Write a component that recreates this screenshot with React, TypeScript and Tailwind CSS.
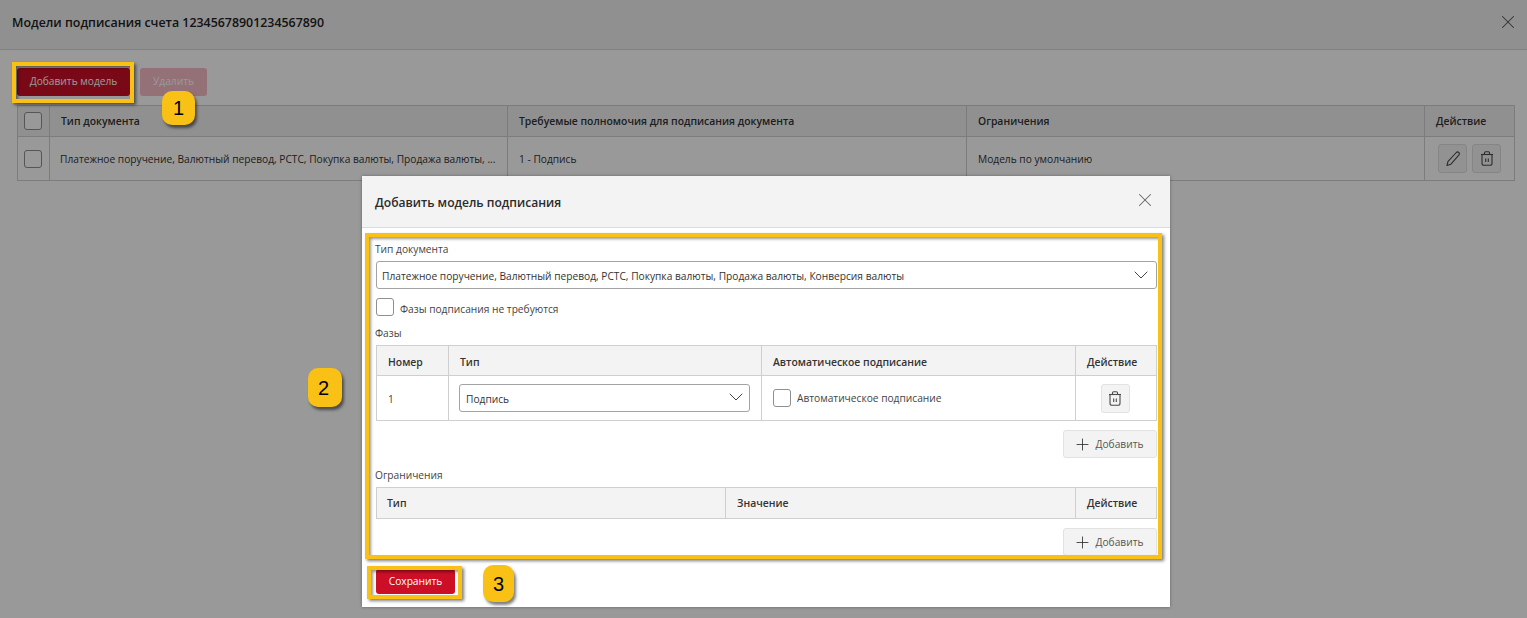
import { Plus, X, ChevronDown } from "lucide-react"

const font = { fontFamily: '"Open Sans", "Noto Sans", sans-serif' }

function TrashIcon() {
  return (
    <svg width="16" height="17" viewBox="0 0 16 17" fill="none" stroke="#4a4a4a" strokeWidth="1.1">
      <path d="M2 4.5h12" />
      <path d="M5.5 4.5V2.8c0-.7.4-1.1 1.1-1.1h2.8c.7 0 1.1.4 1.1 1.1v1.7" />
      <path d="M3 4.5v8.7c0 1.3.8 2.1 2.1 2.1h5.8c1.3 0 2.1-.8 2.1-2.1V4.5" />
      <path d="M6.7 8.5v3.5M9.3 8.5v3.5" />
    </svg>
  )
}

function PencilIcon() {
  return (
    <svg width="16" height="16" viewBox="0 0 16 16" fill="none" stroke="#4a4a4a" strokeWidth="1.1" strokeLinejoin="round">
      <path d="M11.3 1.5c.8-.7 1.9-.6 2.6.1.7.8.6 1.8-.1 2.5L5.7 13.3 2 14.5l.9-3.8z" />
    </svg>
  )
}

function Checkbox() {
  return <span className="block w-[18px] h-[18px] shrink-0 bg-white border border-[#8f8f8f] rounded-[3px]" />
}

function Badge({ n, className }: { n: string; className: string }) {
  return (
    <div
      className={`absolute flex items-center justify-center bg-[#f9c116] rounded-[10px] text-[20px] text-black shadow-[2px_3px_3px_rgba(0,0,0,0.5)] ${className}`}
      style={{ fontFamily: '"Liberation Sans", sans-serif' }}
    >
      {n}
    </div>
  )
}

function Frame({ className }: { className: string }) {
  return (
    <div className={`absolute border-[4px] border-[#f9c116] shadow-[2px_2px_3px_rgba(0,0,0,0.5),inset_2px_2px_3px_rgba(0,0,0,0.4)] ${className}`} />
  )
}

function AddButton() {
  return (
    <div className="flex justify-end">
      <button className="flex items-center justify-center gap-[4px] w-[94px] h-[28px] pr-[4px] bg-[#f3f3f3] border border-[#e2e2e2] rounded-[3px] text-[10.2px] text-[#555]">
        <Plus size={19} strokeWidth={1} color="#222" />
        <span className="pt-[2px]">Добавить</span>
      </button>
    </div>
  )
}

function Select({ value, className, chevron }: { value: string; className: string; chevron: string }) {
  return (
    <div className={`flex items-center justify-between bg-white border border-[#a3a3a3] rounded-[3px] text-[10.2px] text-[#333] ${className}`}>
      <span className="pt-[3px]">{value}</span>
      <ChevronDown size={24} strokeWidth={1} color="#444" className={chevron} />
    </div>
  )
}

export default function App() {
  return (
    <div className="relative w-[1527px] h-[618px] overflow-hidden bg-white" style={font}>
      {/* Page behind the dialog */}
      <div className="flex items-center justify-between h-[50px] pl-[12px] pr-[8px] bg-[#f1f1f1] border-b border-[#d8d8d8]">
        <h1 className="text-[12.4px] font-semibold text-[#222] pb-[2px]">Модели подписания счета 12345678901234567890</h1>
        <X size={22} strokeWidth={1.1} color="#555" className="mb-[5px]" />
      </div>

      <div className="pl-[17px] pr-[12px] pt-[18px]">
        <div className="flex gap-[10px] h-[37px]">
          <button className="w-[113px] h-[28px] bg-[#cc0f27] rounded-[3px] text-[10.2px] text-white">Добавить модель</button>
          <button className="w-[67px] h-[28px] bg-[#f6bcc6] rounded-[3px] text-[10.2px] text-white">Удалить</button>
        </div>

        <div className="w-[1498px] border border-[#cfcfcf] text-[10.2px] text-[#333]">
          <div className="grid grid-cols-[32px_458px_459px_458px_1fr] h-[31px] bg-[#f1f1f1] border-b border-[#cfcfcf] font-semibold text-[10.4px]">
            <div className="flex items-center pl-[6px] border-r border-[#cfcfcf]"><Checkbox /></div>
            <div className="flex items-center pl-[11px] pt-[2px] border-r border-[#cfcfcf]">Тип документа</div>
            <div className="flex items-center pl-[11px] pt-[2px] border-r border-[#cfcfcf]">Требуемые полномочия для подписания документа</div>
            <div className="flex items-center pl-[11px] pt-[2px] border-r border-[#cfcfcf]">Ограничения</div>
            <div className="flex items-center pl-[11px] pt-[2px]">Действие</div>
          </div>
          <div className="grid grid-cols-[32px_458px_459px_458px_1fr] h-[43px]">
            <div className="flex items-center pl-[6px] border-r border-[#cfcfcf]"><Checkbox /></div>
            <div className="flex items-center pl-[10px] pt-[3px] border-r border-[#cfcfcf] whitespace-nowrap">Платежное поручение, Валютный перевод, РСТС, Покупка валюты, Продажа валюты, ...</div>
            <div className="flex items-center pl-[11px] pt-[3px] border-r border-[#cfcfcf]">1 - Подпись</div>
            <div className="flex items-center pl-[11px] pt-[3px] border-r border-[#cfcfcf]">Модель по умолчанию</div>
            <div className="flex items-center gap-[5px] pl-[13px]">
              <button className="flex items-center justify-center w-[29px] h-[29px] bg-[#f3f3f3] border border-[#dedede] rounded-[3px]"><PencilIcon /></button>
              <button className="flex items-center justify-center w-[29px] h-[29px] bg-[#f3f3f3] border border-[#dedede] rounded-[3px]"><TrashIcon /></button>
            </div>
          </div>
        </div>
      </div>

      {/* Overlay */}
      <div className="absolute inset-0 bg-black/40" />

      {/* Dialog */}
      <div className="absolute left-[362px] top-[176px] w-[808px] h-[431px] bg-white shadow-[0_0_3px_rgba(0,0,0,0.35)]">
        <div className="flex items-center justify-between h-[52px] pl-[13px] pr-[14px] bg-[#f3f3f3] border-b border-[#dcdcdc]">
          <h2 className="text-[12.1px] font-semibold text-[#2b2b2b] pt-[4px]">Добавить модель подписания</h2>
          <X size={22} strokeWidth={1.1} color="#666" className="mb-[4px]" />
        </div>

        <div className="pl-[14px] pr-[13px] text-[10.2px] text-[#444]">
          <label className="block pt-[14px] leading-[14px] -ml-[1px]">Тип документа</label>
          <Select
            value="Платежное поручение, Валютный перевод, РСТС, Покупка валюты, Продажа валюты, Конверсия валюты"
            className="mt-[5px] h-[28px] pl-[5px] pr-[3px]"
            chevron=""
          />
          <div className="flex items-center gap-[6px] mt-[9px] h-[18px]">
            <Checkbox />
            <span className="pt-[6px]">Фазы подписания не требуются</span>
          </div>
          <label className="block mt-[10px] leading-[14px] -ml-[1px]">Фазы</label>

          <div className="mt-[5px] border border-[#cfcfcf]">
            <div className="grid grid-cols-[72px_313px_314px_1fr] h-[30px] bg-[#f3f3f3] border-b border-[#cfcfcf] font-semibold text-[#333] text-[10.4px]">
              <div className="flex items-center pl-[11px] pt-[4px] border-r border-[#cfcfcf]">Номер</div>
              <div className="flex items-center pl-[11px] pt-[4px] border-r border-[#cfcfcf]">Тип</div>
              <div className="flex items-center pl-[11px] pt-[4px] border-r border-[#cfcfcf]">Автоматическое подписание</div>
              <div className="flex items-center pl-[11px] pt-[4px]">Действие</div>
            </div>
            <div className="grid grid-cols-[72px_313px_314px_1fr] h-[44px]">
              <div className="flex items-center pl-[11px] pt-[4px] border-r border-[#cfcfcf]">1</div>
              <div className="flex items-center pl-[10px] pr-[11px] border-r border-[#cfcfcf]">
                <Select value="Подпись" className="w-full h-[28px] pl-[6px] pr-[1px]" chevron="-mt-[2px]" />
              </div>
              <div className="flex items-center gap-[6px] pl-[11px] border-r border-[#cfcfcf]">
                <Checkbox />
                <span className="pt-[2px]">Автоматическое подписание</span>
              </div>
              <div className="flex items-center justify-center pr-[2px]">
                <button className="flex items-center justify-center w-[29px] h-[29px] bg-[#f3f3f3] border border-[#e2e2e2] rounded-[3px]"><TrashIcon /></button>
              </div>
            </div>
          </div>

          <div className="mt-[9px]"><AddButton /></div>
          <label className="block mt-[10px] leading-[14px] -ml-[1px]">Ограничения</label>

          <div className="mt-[5px] border border-[#cfcfcf]">
            <div className="grid grid-cols-[349px_350px_1fr] h-[30px] bg-[#f3f3f3] font-semibold text-[#333] text-[10.4px]">
              <div className="flex items-center pl-[10px] pt-[2px] border-r border-[#cfcfcf]">Тип</div>
              <div className="flex items-center pl-[11px] pt-[2px] border-r border-[#cfcfcf]">Значение</div>
              <div className="flex items-center pl-[11px] pt-[2px]">Действие</div>
            </div>
          </div>

          <div className="mt-[9px]"><AddButton /></div>

          <button className="block mt-[13px] w-[79px] h-[25px] bg-[#cc0f27] rounded-[3px] text-[10.2px] text-white">Сохранить</button>
        </div>
      </div>

      {/* Annotations */}
      <Frame className="left-[12px] top-[62px] w-[122px] h-[41px]" />
      <Frame className="left-[365px] top-[233px] w-[797px] h-[326px]" />
      <Frame className="left-[367px] top-[566px] w-[95px] h-[33px]" />
      <Badge n="1" className="left-[162px] top-[91px] w-[33px] h-[34px]" />
      <Badge n="2" className="left-[308px] top-[368px] w-[34px] h-[39px] pr-[3px]" />
      <Badge n="3" className="left-[483px] top-[565px] w-[31px] h-[37px]" />
    </div>
  )
}
